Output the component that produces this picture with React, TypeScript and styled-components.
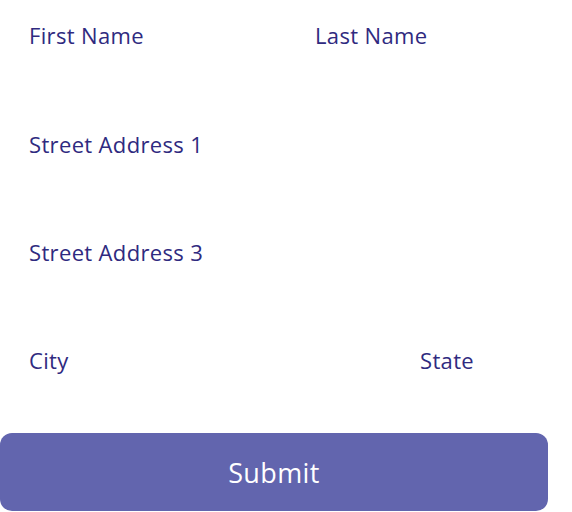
import React from 'react';
import styled, { createGlobalStyle } from 'styled-components';

const GlobalStyle = createGlobalStyle`
  body {
    margin: 0;
    background: #ffffff;
    font-family: "Open Sans", Lato, sans-serif;
  }
`;

const Form = styled.form`
  width: 548px;
  padding-top: 22px;
`;

const Fields = styled.div`
  display: flex;
  flex-direction: column;
  gap: 22px;
`;

const Row = styled.div<{ $columns: string; $extra?: number }>`
  display: grid;
  grid-template-columns: ${props => props.$columns};
  padding-left: 29px;
  margin-bottom: ${props => props.$extra || 0}px;
`;

const Field = styled.div`
  display: flex;
  flex-direction: column;
  min-width: 0;
`;

const Label = styled.label`
  font-size: 22px;
  line-height: 26px;
  letter-spacing: 0.35px;
  color: #2f2a80;
`;

const Input = styled.input`
  width: 100%;
  min-width: 0;
  height: 60px;
  border: none;
  outline: none;
  background: transparent;
  padding: 0;
  font-family: inherit;
  font-size: 22px;
  color: #2f2a80;
`;

const SubmitButton = styled.button`
  display: block;
  width: 548px;
  height: 78px;
  border: none;
  border-radius: 12px;
  background: #6265ae;
  color: #ffffff;
  font-family: "Open Sans", Lato, sans-serif;
  font-size: 27px;
  letter-spacing: 0.4px;
  cursor: pointer;
`;

const fields: { columns: string; items: string[]; extra?: number }[] = [
  { columns: '286px minmax(0, 1fr)', items: ['First Name', 'Last Name'], extra: 1 },
  { columns: 'minmax(0, 1fr)', items: ['Street Address 1'] },
  { columns: 'minmax(0, 1fr)', items: ['Street Address 3'] },
  { columns: '391px minmax(0, 1fr)', items: ['City', 'State'] },
];

const App: React.FC = () => {
  return (
    <>
      <GlobalStyle />
      <Form onSubmit={e => e.preventDefault()}>
        <Fields>
          {fields.map(row => (
            <Row key={row.items.join()} $columns={row.columns} $extra={row.extra}>
              {row.items.map(name => (
                <Field key={name}>
                  <Label>{name}</Label>
                  <Input aria-label={name} />
                </Field>
              ))}
            </Row>
          ))}
        </Fields>
        <SubmitButton type="submit">Submit</SubmitButton>
      </Form>
    </>
  );
};

export default App;
